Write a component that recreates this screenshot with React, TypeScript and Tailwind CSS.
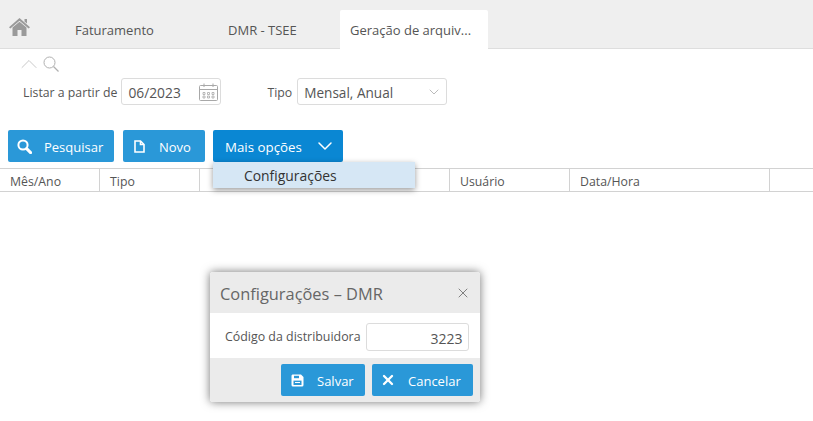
import { ChevronDown, ChevronUp, X } from "lucide-react";

const font = "font-['Open_Sans',sans-serif]";

const HomeIcon = () => (
  <svg width="21" height="18" viewBox="0 0 21 18" className="text-[#9a9a9a]" fill="currentColor">
    <path d="M10.5 0 L21 9.2 L19.6 10.6 L10.5 2.8 L1.4 10.6 L0 9.2 Z" />
    <path d="M3.5 9.6 L10.5 3.8 L17.5 9.6 V18 H12.5 V12 H8.5 V18 H3.5 Z" />
    <path d="M15.5 1 H18 V5.5 L15.5 3.4 Z" />
  </svg>
);

const CalendarIcon = () => (
  <svg width="19" height="18" viewBox="0 0 19 18" fill="none" stroke="#a8a8a8" strokeWidth="1">
    <rect x="0.5" y="2.5" width="18" height="15" rx="1" />
    <path d="M0.5 6.5 H18.5 M5 0.5 V4 M14 0.5 V4" />
    <path d="M4 9.5 h2 v2 h-2 z M8.5 9.5 h2 v2 h-2 z M13 9.5 h2 v2 h-2 z M4 13 h2 v2 h-2 z M8.5 13 h2 v2 h-2 z M13 13 h2 v2 h-2 z" strokeWidth="0.8" />
  </svg>
);

const SearchThin = () => (
  <svg width="16" height="16" viewBox="0 0 16 16" fill="none" stroke="#b0b0b0" strokeWidth="1">
    <circle cx="6.5" cy="6.5" r="5.5" />
    <path d="M10.5 10.5 L15.5 15.5" strokeWidth="1.2" />
  </svg>
);

const SearchBold = () => (
  <svg width="15" height="15" viewBox="0 0 15 15" fill="none" stroke="white">
    <circle cx="6" cy="6" r="4.6" strokeWidth="2" />
    <path d="M9.6 9.6 L13.6 13.6" strokeWidth="3" strokeLinecap="round" />
  </svg>
);

const FileIcon = () => (
  <svg width="11" height="13" viewBox="0 0 11 13" fill="none" stroke="white" strokeWidth="1.6">
    <path d="M1 1 H6.5 L10 4.5 V12 H1 Z" />
    <path d="M6.5 1 V4.5 H10" />
  </svg>
);

const SaveIcon = () => (
  <svg width="13" height="13" viewBox="0 0 13 13" fill="white">
    <path d="M1.5 0.5 H10 L12.5 3 V11 a1.5 1.5 0 0 1 -1.5 1.5 H2 A1.5 1.5 0 0 1 0.5 11 V2 A1.5 1.5 0 0 1 1.5 0.5 Z" />
    <rect x="3" y="1.8" width="5" height="2.4" fill="#2a98d8" />
    <rect x="2.5" y="6.6" width="8" height="4.4" fill="#2a98d8" />
    <rect x="4" y="8" width="5" height="1" fill="white" />
  </svg>
);

const tabs = [
  { label: "Faturamento", width: "w-[153px]" },
  { label: "DMR - TSEE", width: "w-[122px]" },
];

const columns = [
  { label: "Mês/Ano", width: "w-[100px]" },
  { label: "Tipo", width: "w-[100px]" },
  { label: "", width: "w-[250px]" },
  { label: "Usuário", width: "w-[120px]" },
  { label: "Data/Hora", width: "w-[200px]" },
];

export default function App() {
  return (
    <div className={`${font} relative h-[421px] w-[813px] overflow-hidden bg-white text-[13px] text-[#555]`}>
      {/* Tabs */}
      <div className="flex h-[49px] items-end border-b border-[#dedede] bg-[#efefef]">
        <div className="flex h-[48px] w-[65px] items-start pl-[9px] pt-[18px]">
          <HomeIcon />
        </div>
        {tabs.map((t) => (
          <div key={t.label} className={`flex h-[38px] items-center pl-[10px] pt-[3px] ${t.width}`}>
            {t.label}
          </div>
        ))}
        <div className="-mb-px flex h-[39px] w-[148px] items-center rounded-t-[2px] bg-white pl-[10px] pt-[3px]">
          Geração de arquiv...
        </div>
      </div>

      {/* Filters */}
      <div className="flex h-[24px] items-center pl-[15px] pt-[6px] text-[#c4c4c4]">
        <ChevronUp size={28} strokeWidth={0.8} />
        <SearchThin />
      </div>
      <div className="mt-[5px] flex h-[27px] items-center pl-[23px] text-[12.3px]">
        <span className="pt-[3px]">Listar a partir de</span>
        <div className="ml-[4px] flex h-[27px] w-[100px] items-center justify-between rounded-[3px] border border-[#dcdcdc] pl-[6px] pr-[2px] text-[13.8px]">
          <span className="pt-[3px]">06/2023</span>
          <CalendarIcon />
        </div>
        <span className="ml-[46px] pt-[3px]">Tipo</span>
        <div className="ml-[5px] flex h-[27px] w-[150px] items-center justify-between rounded-[3px] border border-[#dcdcdc] pl-[6px] pr-[4px] text-[13.6px]">
          <span className="pt-[3px]">Mensal, Anual</span>
          <ChevronDown size={16} strokeWidth={1} className="text-[#999]" />
        </div>
      </div>

      {/* Buttons */}
      <div className="mt-[25px] flex h-[32px] gap-[9px] pl-[8px] text-white">
        <button className="flex w-[106px] items-center rounded-[2px] bg-[#2a98d8] pl-[9px]">
          <SearchBold />
          <span className="ml-[12px] pt-[3px]">Pesquisar</span>
        </button>
        <button className="flex w-[82px] items-center rounded-[2px] bg-[#2a98d8] pl-[11px]">
          <FileIcon />
          <span className="ml-[14px] pt-[3px]">Novo</span>
        </button>
        <button className="-ml-px flex w-[130px] items-center rounded-[2px] bg-[#0a87d3] pl-[12px] text-[13.3px]">
          <span className="pt-[3px]">Mais opções</span>
          <ChevronDown size={24} strokeWidth={1.5} className="ml-[11px]" />
        </button>
      </div>

      {/* Table header */}
      <div className="mt-[6px] flex h-[24px] border-y border-[#d2d2d2] text-[12.3px]">
        {columns.map((c) => (
          <div key={c.label || "blank"} className={`flex items-center border-r border-[#d2d2d2] pl-[10px] pt-[4px] ${c.width}`}>
            {c.label}
          </div>
        ))}
      </div>

      {/* Dropdown */}
      <div className="absolute left-[213px] top-[162px] flex h-[26px] w-[202px] items-center bg-[#d6e7f5] pl-[31px] pt-[3px] text-[13.9px] text-[#333] shadow-[0_2px_6px_rgba(0,0,0,0.4)]">
        Configurações
      </div>

      {/* Dialog */}
      <div className="absolute left-[210px] top-[272px] w-[270px] overflow-hidden rounded-[3px] bg-white shadow-[0_0_10px_rgba(0,0,0,0.55)]">
        <div className="flex h-[41px] items-center justify-between bg-[#ebebeb] pl-[10px] pr-[9px] text-[16.4px] text-[#666]">
          <span className="pt-[4px]">Configurações – DMR</span>
          <X size={16} strokeWidth={1.4} className="text-[#777]" />
        </div>
        <div className="flex h-[45px] items-center pl-[15px] text-[12.4px]">
          <span className="pt-[4px]">Código da distribuidora</span>
          <div className="ml-[5px] mt-[2px] flex h-[28px] w-[103px] items-center justify-end rounded-[3px] border border-[#dcdcdc] pr-[5px] text-[14px]">
            <span className="pt-[3px]">3223</span>
          </div>
        </div>
        <div className="flex h-[44px] items-start justify-end gap-[7px] bg-[#ebebeb] pr-[7px] pt-[6px] text-white">
          <button className="flex h-[32px] w-[84px] items-center rounded-[2px] bg-[#2a98d8] pl-[10px]">
            <SaveIcon />
            <span className="ml-[13px] pt-[3px]">Salvar</span>
          </button>
          <button className="flex h-[32px] w-[101px] items-center rounded-[2px] bg-[#2a98d8] pl-[8px]">
            <X size={16} strokeWidth={3.5} />
            <span className="ml-[12px] pt-[3px]">Cancelar</span>
          </button>
        </div>
      </div>
    </div>
  );
}
